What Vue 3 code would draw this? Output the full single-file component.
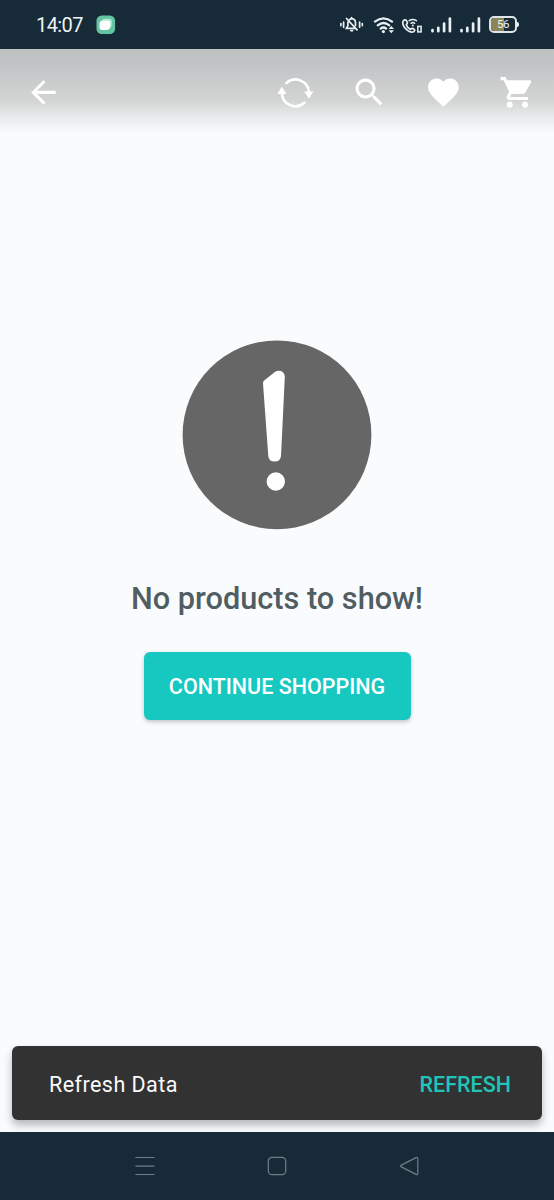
<template>
  <div class="screen">
    <header class="status-bar">
      <span class="status-time">14:07</span>
      <svg class="status-app" viewBox="0 0 20 20">
        <rect x="0.5" y="0.5" width="18.6" height="18.6" rx="5.2" fill="#62c6a2" />
        <rect x="5.8" y="3.8" width="10" height="9" rx="2.8" fill="#b4e8d2" />
        <path d="M6.8 5.8H12q2.1 0 2.1 2.1v3.6q0 3.4-3.4 3.4H6.2q-2.7 0-2.7-2.4V9q0-3.2 3.3-3.2z" fill="#fff" />
      </svg>

      <div class="status-icons">
        <!-- 静音 -->
        <svg class="icon-mute" viewBox="339 14 26 22">
          <g fill="none" stroke="#e9f0f3" stroke-width="1.7" stroke-linecap="round">
            <path d="M340.9 23.6v2M343.6 22v5.2M359.6 22v5.2M362.3 23.6v2" />
            <path d="M349.5 19.8q1-1.1 2.2-1.1 3.8.3 3.8 4.4v2.3M347.9 22.2v3.5l-1.5 2.6h9.4M350.8 30.6h1.8M351.6 17.6v.9M346.5 18.5l10.6 11.4" />
          </g>
        </svg>
        <!-- WiFi -->
        <svg class="icon-wifi" viewBox="373 14 23 20">
          <g fill="none" stroke="#e9f0f3" stroke-width="2.2" stroke-linecap="round">
            <path d="M374.9 20.6q8.6-6.6 17.2 0M377.7 24.3q5.8-4.6 11.6 0M380.6 27.6q2.9-2.2 5.6 0" />
          </g>
          <circle cx="383.4" cy="30.6" r="1.6" fill="#e9f0f3" />
          <path d="M388.6 28l2.7-3 2.7 3zM388.6 29.2h5.4l-2.7 3z" fill="#e9f0f3" />
        </svg>
        <!-- WiFi 通话 -->
        <svg class="icon-call" viewBox="401 14 23 20">
          <path
            d="M403.1 20.2q1.8-2.2 3.2-.8l1 2q.4 1-1 2.3 1 3.4 4.2 4.7 1.5-1.4 2.5-.9l1.4 1q.8 1.2-.8 2.3-2.4 1.2-6.1-1.4-5.9-4.8-4.4-9.2z"
            fill="none"
            stroke="#e9f0f3"
            stroke-width="1.7"
          />
          <g fill="none" stroke="#e9f0f3" stroke-width="1.5" stroke-linecap="round">
            <path d="M409.2 19.7q3.6-2.6 7.2 0M411 22.3q1.9-1.4 3.6 0" />
            <rect x="417.8" y="25.4" width="3.3" height="5.5" />
          </g>
          <circle cx="412.8" cy="24.4" r="1" fill="#e9f0f3" />
        </svg>
        <svg v-for="n in 2" :key="n" class="icon-signal" viewBox="0 0 21 16">
          <path
            d="M1.5 13v1.2M7.3 10.8v3.4M13.1 6.6v7.6M18.9 1.6v12.6"
            fill="none"
            stroke="#e9f0f3"
            stroke-width="2.7"
            stroke-linecap="round"
          />
        </svg>
        <div class="battery">
          <span class="battery-level" :style="{ width: battery + '%' }"></span>
          <span class="battery-text">{{ battery }}</span>
        </div>
      </div>
    </header>

    <nav class="toolbar">
      <button type="button" class="tool-btn" aria-label="Back">
        <svg viewBox="0 0 24 24"><path d="M20 11H7.83l5.59-5.59L12 4l-8 8 8 8 1.41-1.41L7.83 13H20v-2z" /></svg>
      </button>
      <div class="toolbar-actions">
        <button type="button" class="tool-btn" aria-label="Refresh" @click="refresh">
          <svg viewBox="277 73.5 37 37">
            <path
              d="M286.5 82.5A13.6 13.6 0 0 1 309.1 92M304.5 102.4A13.6 13.6 0 0 1 281.9 92"
              fill="none"
              stroke="#fff"
              stroke-width="2.6"
              stroke-linecap="round"
            />
            <path d="M304.2 91.2h9.4l-4.4 7.2zM277.3 93.6h9.4l-4.9-7.2z" />
          </svg>
        </button>
        <button v-for="item in actions" :key="item.name" type="button" class="tool-btn" :aria-label="item.name">
          <svg viewBox="0 0 24 24"><path :d="item.path" /></svg>
        </button>
      </div>
    </nav>

    <main class="content">
      <svg class="notice" viewBox="182 340 190 190">
        <circle cx="277" cy="434.8" r="94.4" fill="#666" />
        <path
          d="M264.5 380.2L274.8 372q3-2 6.2-.9 3.8 1.5 3.8 5.9L281 456q-.6 5.5-6.3 5.5-6 0-6.4-5.5L263 383.5q-.1-2.2 1.5-3.3z"
          fill="#fff"
        />
        <circle cx="275.8" cy="481.5" r="9.2" fill="#fff" />
      </svg>
      <h1 class="empty-title">No products to show!</h1>
      <button type="button" class="shop-btn">CONTINUE SHOPPING</button>
    </main>

    <div class="snackbar">
      <span class="snackbar-text">Refresh Data</span>
      <button type="button" class="snackbar-action" @click="refresh">REFRESH</button>
    </div>

    <footer class="nav-bar">
      <svg viewBox="0 0 24 24"><path d="M2.4 3.5h19M2.4 12.1h19M2.4 20.5h19" /></svg>
      <svg viewBox="0 0 24 24"><rect x="3.3" y="3.4" width="17.4" height="17.3" rx="3.6" /></svg>
      <svg viewBox="0 0 24 24"><path d="M18 3.6L3.4 11.1q-1.7.9 0 1.8L18 20.4q1.8.7 1.8-1.2V4.8q0-1.9-1.8-1.2z" /></svg>
    </footer>
  </div>
</template>

<script setup>
import { ref } from 'vue'

const battery = ref(56)

const actions = [
  {
    name: 'Search',
    path: 'M15.5 14h-.79l-.28-.27C15.41 12.59 16 11.11 16 9.5 16 5.91 13.09 3 9.5 3S3 5.91 3 9.5 5.91 16 9.5 16c1.61 0 3.09-.59 4.23-1.57l.27.28v.79l5 4.99L20.49 19l-4.99-5zm-6 0C7.01 14 5 11.99 5 9.5S7.01 5 9.5 5 14 7.01 14 9.5 11.99 14 9.5 14z',
  },
  {
    name: 'Favorites',
    path: 'M12 21.35l-1.45-1.32C5.4 15.36 2 12.28 2 8.5 2 5.42 4.42 3 7.5 3c1.74 0 3.41.81 4.5 2.09C13.09 3.81 14.76 3 16.5 3 19.58 3 22 5.42 22 8.5c0 3.78-3.4 6.86-8.55 11.54L12 21.35z',
  },
  {
    name: 'Cart',
    path: 'M7 18c-1.1 0-1.99.9-1.99 2S5.9 22 7 22s2-.9 2-2-.9-2-2-2zM1 2v2h2l3.6 7.59-1.35 2.45c-.16.28-.25.61-.25.96 0 1.1.9 2 2 2h12v-2H7.42c-.14 0-.25-.11-.25-.25l.03-.12.9-1.63h7.45c.75 0 1.41-.41 1.75-1.03l3.58-6.49c.08-.14.12-.31.12-.48 0-.55-.45-1-1-1H5.21l-.94-2H1zm16 16c-1.1 0-1.99.9-1.99 2s.89 2 1.99 2 2-.9 2-2-.9-2-2-2z',
  },
]

function refresh() {
  window.location.reload()
}
</script>

<style>
body {
  margin: 0;
}
</style>

<style scoped>
.screen {
  display: flex;
  flex-direction: column;
  width: 554px;
  height: 1200px;
  overflow: hidden;
  background: #fafbfd;
  font-family: Roboto, 'Liberation Sans', sans-serif;
}

svg {
  display: block;
  flex-shrink: 0;
}

button {
  border: none;
  font-family: inherit;
  cursor: pointer;
}

.status-bar {
  display: flex;
  align-items: center;
  height: 49px;
  flex-shrink: 0;
  box-sizing: border-box;
  padding: 0 37px 0 36px;
  background: #172a37;
}

.status-time {
  width: 60px;
  font-size: 20px;
  line-height: 24px;
  letter-spacing: -0.6px;
  color: #eef3f5;
}

.status-app {
  width: 20px;
  height: 20px;
}

.status-icons {
  display: flex;
  align-items: center;
  margin-left: auto;
}

.icon-mute {
  width: 26px;
  height: 22px;
  margin-right: 8px;
}

.icon-wifi {
  width: 23px;
  height: 20px;
  margin-right: 5px;
}

.icon-call {
  width: 23px;
  height: 20px;
  margin-right: 7px;
}

.icon-signal {
  width: 21px;
  height: 16px;
  margin-right: 8px;
}

.battery {
  display: flex;
  position: relative;
  box-sizing: border-box;
  width: 28px;
  height: 17px;
  border: 2px solid #dfe6e9;
  border-radius: 5px;
}

.battery::after {
  content: '';
  position: absolute;
  right: -4px;
  top: 4px;
  width: 2px;
  height: 5px;
  border-radius: 0 2px 2px 0;
  background: #e9f0f3;
}

.battery-level {
  background: #8d8557;
  border-radius: 3px 0 0 3px;
}

.battery-text {
  position: absolute;
  inset: 0;
  font-size: 11.5px;
  line-height: 13px;
  text-align: center;
  letter-spacing: -0.4px;
  color: #eef3f5;
}

.toolbar {
  display: flex;
  justify-content: space-between;
  align-items: flex-start;
  box-sizing: border-box;
  height: 86px;
  flex-shrink: 0;
  padding: 24.5px 18.5px 0 24.5px;
  background: linear-gradient(#bfc1c2 0, #c2c3c5 16px, #cacbcb 32px, #d3d5d4 52px, #e6e7e9 66px, #f4f5f7 78px, #fafbfd 86px);
}

.toolbar-actions {
  display: flex;
  gap: 37px;
}

.tool-btn {
  width: 36.8px;
  height: 36.8px;
  padding: 0;
  background: none;
}

.tool-btn svg {
  width: 100%;
  height: 100%;
  fill: #fff;
}

.content {
  flex: 1;
  display: flex;
  flex-direction: column;
  align-items: center;
  padding-top: 205px;
}

.notice {
  width: 190px;
  height: 190px;
}

.empty-title {
  margin: 50px 0 0;
  font-size: 30.7px;
  font-weight: 500;
  line-height: 38px;
  white-space: nowrap;
  color: #505d63;
}

.shop-btn {
  width: 267px;
  height: 67.5px;
  margin-top: 34px;
  padding: 1px 0 0;
  border-radius: 6px;
  background: #16c8c0;
  box-shadow: 0 2px 4px rgba(0, 0, 0, 0.22);
  font-size: 21.5px;
  font-weight: 500;
  white-space: nowrap;
  color: #fff;
}

.snackbar {
  display: flex;
  align-items: center;
  justify-content: space-between;
  box-sizing: border-box;
  height: 74px;
  flex-shrink: 0;
  margin: 0 12px 12px;
  padding: 2px 31px 0 37px;
  border-radius: 6px;
  background: #323232;
  box-shadow: 0 5px 9px rgba(0, 0, 0, 0.28);
}

.snackbar-text {
  font-size: 21.5px;
  letter-spacing: 0.45px;
  color: #fbfbfb;
}

.snackbar-action {
  padding: 0;
  background: none;
  font-size: 21.5px;
  font-weight: 500;
  color: #20c4b8;
}

.nav-bar {
  display: flex;
  justify-content: center;
  gap: 108.5px;
  box-sizing: border-box;
  height: 68px;
  flex-shrink: 0;
  padding-top: 22px;
  background: #172a37;
}

.nav-bar svg {
  width: 24px;
  height: 24px;
  fill: none;
  stroke: #6f7f89;
  stroke-width: 1.2;
}
</style>
